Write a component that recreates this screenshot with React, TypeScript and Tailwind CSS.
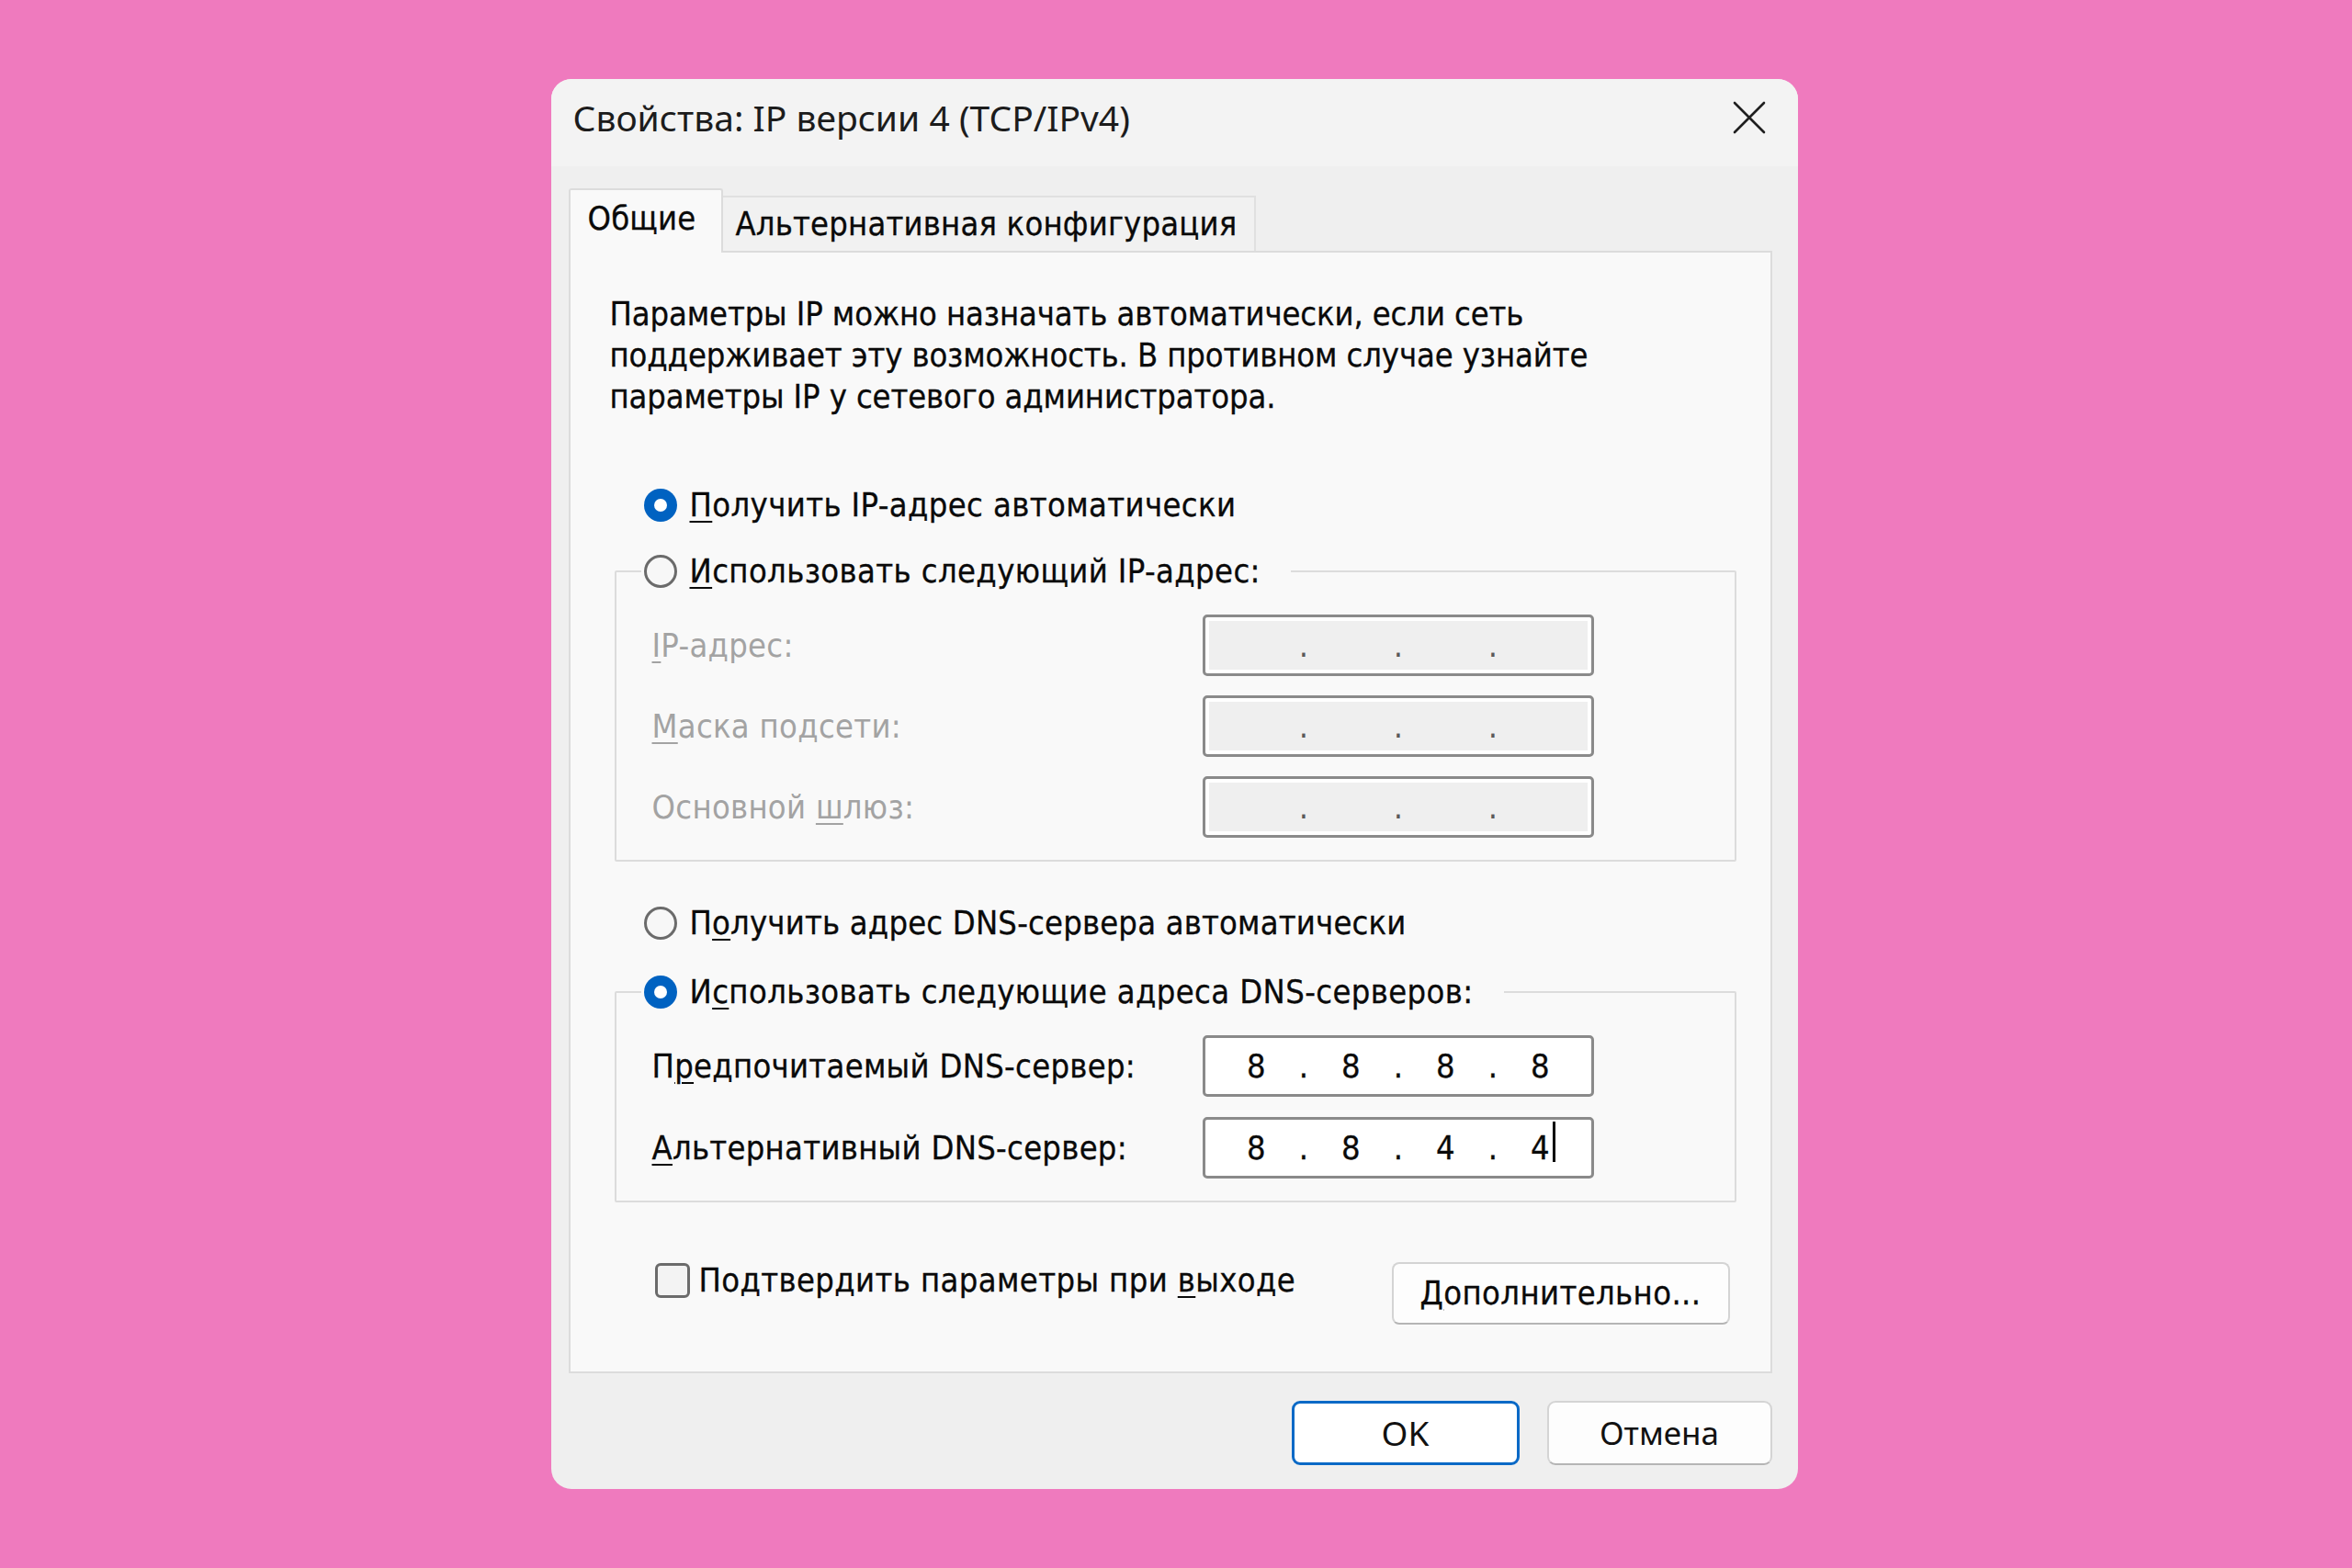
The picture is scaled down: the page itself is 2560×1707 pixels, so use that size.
import React from 'react';

const shell = "font-['DejaVu_Sans_Condensed','DejaVu_Sans',sans-serif]";
const segoe = "font-['Noto_Sans','Open_Sans',sans-serif]";

function Radio({ checked }: { checked: boolean }) {
  return checked ? (
    <span className="flex h-[36px] w-[36px] shrink-0 items-center justify-center rounded-full bg-[#0062c1]">
      <span className="h-[14px] w-[14px] rounded-full bg-white" />
    </span>
  ) : (
    <span className="h-[36px] w-[36px] shrink-0 rounded-full border-[3px] border-[#6b6b6b] bg-[#f7f7f7]" />
  );
}

function Key({ children }: { children: React.ReactNode }) {
  return <span className="underline decoration-[2px] underline-offset-[5px]">{children}</span>;
}

function IpBox({ octets, disabled, caret }: { octets?: string[]; disabled?: boolean; caret?: boolean }) {
  const cells = octets ?? ['', '', '', ''];
  return (
    <div
      className={
        disabled
          ? 'flex h-[67px] w-[426px] items-center rounded-[5px] border-[3px] border-[#8a8a8a] bg-[#efefef] pl-[17px] shadow-[inset_0_0_0_4px_#ffffff]'
          : 'flex h-[67px] w-[426px] items-center rounded-[5px] border-[3px] border-[#8a8a8a] bg-white pl-[17px]'
      }
    >
      {cells.map((v, i) => (
        <React.Fragment key={i}>
          <span className="flex w-[78px] justify-center text-[#0a0a0a]">
            <span className="relative">
              {v}
              {caret && i === 3 && (
                <span className="absolute right-[-6px] top-[-2px] h-[44px] w-[3px] bg-black" />
              )}
            </span>
          </span>
          {i < 3 && (
            <span className={disabled ? 'w-[25px] text-center text-[#5a5a5a]' : 'w-[25px] text-center text-[#0a0a0a]'}>.</span>
          )}
        </React.Fragment>
      ))}
    </div>
  );
}

function Row({ label, children, disabled }: { label: React.ReactNode; children: React.ReactNode; disabled?: boolean }) {
  return (
    <div className="flex h-[67px] items-center pl-[39px]">
      <span className={disabled ? 'w-[599px] shrink-0 text-[#a3a3a3]' : 'w-[599px] shrink-0 text-[#0a0a0a]'}>{label}</span>
      {children}
    </div>
  );
}

export default function App() {
  return (
    <div className={`flex h-screen w-full items-center justify-center bg-[#ef7abe] ${shell}`}>
      <div className="mr-[4px] flex h-[1535px] w-[1357px] flex-col overflow-hidden rounded-[22px] bg-[#efefef]">
        {/* Title bar */}
        <div className="flex h-[95px] shrink-0 items-center justify-between bg-[#f3f3f3] pb-[10px] pl-[24px] pr-[35px]">
          <span className={`${segoe} text-[39px] text-[#1c1c1c]`}>Свойства: IP версии 4 (TCP/IPv4)</span>
          <svg width="36" height="36" viewBox="0 0 36 36" className="mt-[-2px]">
            <path d="M2 2 L34 34 M34 2 L2 34" stroke="#1f1f1f" strokeWidth="2.6" strokeLinecap="round" />
          </svg>
        </div>

        <div className="flex flex-1 flex-col pl-[19px] pr-[28px] pt-[24px]">
          {/* Tabs */}
          <div className="flex h-[68px] items-end text-[36px] tracking-[0.2px] text-[#0a0a0a] [-webkit-text-stroke:0.3px_#0a0a0a]">
            <div className="relative z-10 mb-[-2px] flex h-[70px] w-[168px] items-center rounded-t-[3px] border-2 border-b-0 border-[#dcdcdc] bg-[#f9f9f9] pl-[19px] pb-[6px]">
              Общие
            </div>
            <div className="flex h-[60px] w-[580px] items-center border-2 border-b-0 border-l-0 border-[#e0e0e0] bg-[#f1f1f1] pl-[14px]">
              Альтернативная конфигурация
            </div>
          </div>

          {/* Panel */}
          <div className="flex h-[1222px] shrink-0 flex-col border-2 border-[#dcdcdc] bg-[#f9f9f9] text-[36px] text-[#0a0a0a]">
            <p className="pl-[43px] pt-[44px] leading-[45px] whitespace-nowrap tracking-[-0.1px] [-webkit-text-stroke:0.3px_#0a0a0a]">
              Параметры IP можно назначать автоматически, если сеть
              <br />
              поддерживает эту возможность. В противном случае узнайте
              <br />
              параметры IP у сетевого администратора.
            </p>

            <div className="ml-[80px] mt-[74px] flex h-[44px] items-center gap-[14px] tracking-[0.4px] [-webkit-text-stroke:0.3px_#0a0a0a]">
              <Radio checked />
              <span>
                <Key>П</Key>олучить IP-адрес автоматически
              </span>
            </div>

            <fieldset className="ml-[48px] mr-[37px] mt-[28px] rounded-[2px] border-2 border-[#dcdcdc] pb-[24px]">
              <legend className="ml-[27px] flex h-[44px] items-center gap-[14px] pl-[3px] pr-[33px] tracking-[0.4px] [-webkit-text-stroke:0.3px_#0a0a0a]">
                <Radio checked={false} />
                <span>
                  <Key>И</Key>спользовать следующий IP-адрес:
                </span>
              </legend>
              <div className="mt-[25px] flex flex-col gap-[21px] tracking-[0.3px]">
                <Row disabled label={<><Key>I</Key>P-адрес:</>}>
                  <IpBox disabled />
                </Row>
                <Row disabled label={<><Key>М</Key>аска подсети:</>}>
                  <IpBox disabled />
                </Row>
                <Row disabled label={<>Основной <Key>ш</Key>люз:</>}>
                  <IpBox disabled />
                </Row>
              </div>
            </fieldset>

            <div className="ml-[80px] mt-[45px] flex h-[44px] items-center gap-[14px] tracking-[0.2px] [-webkit-text-stroke:0.3px_#0a0a0a]">
              <Radio checked={false} />
              <span>
                П<Key>о</Key>лучить адрес DNS-сервера автоматически
              </span>
            </div>

            <fieldset className="ml-[48px] mr-[37px] mt-[31px] rounded-[2px] border-2 border-[#dcdcdc] pb-[24px]">
              <legend className="ml-[27px] flex h-[44px] items-center gap-[14px] pl-[3px] pr-[33px] tracking-[0.4px] [-webkit-text-stroke:0.3px_#0a0a0a]">
                <Radio checked />
                <span>
                  И<Key>с</Key>пользовать следующие адреса DNS-серверов:
                </span>
              </legend>
              <div className="mt-[25px] flex flex-col gap-[22px] tracking-[0.3px] [-webkit-text-stroke:0.3px_#0a0a0a]">
                <Row label={<>П<Key>р</Key>едпочитаемый DNS-сервер:</>}>
                  <IpBox octets={['8', '8', '8', '8']} />
                </Row>
                <Row label={<><Key>А</Key>льтернативный DNS-сервер:</>}>
                  <IpBox octets={['8', '8', '4', '4']} caret />
                </Row>
              </div>
            </fieldset>

            <div className="ml-[92px] mr-[44px] mt-[63px] flex items-start justify-between tracking-[0.4px] [-webkit-text-stroke:0.3px_#0a0a0a]">
              <div className="flex h-[44px] items-center gap-[10px]">
                <span className="h-[38px] w-[38px] rounded-[6px] border-[3px] border-[#6b6b6b] bg-[#f3f3f3] [-webkit-text-stroke:0]" />
                <span>
                  Подтвердить параметры при <Key>в</Key>ыходе
                </span>
              </div>
              <button className="mt-[2px] flex h-[68px] w-[368px] items-center justify-center rounded-[8px] border-2 border-[#d4d4d4] border-b-[#b5b5b5] bg-[#fdfdfd] text-[36px] text-[#0a0a0a]">
                <Key>Д</Key>ополнительно...
              </button>
            </div>
          </div>

          {/* Footer buttons */}
          <div className="mt-[30px] flex justify-end gap-[30px]">
            <button className={`${segoe} flex h-[70px] w-[248px] items-center justify-center rounded-[9px] border-[3px] border-[#0a69c6] bg-white text-[37px] text-[#111]`}>
              OK
            </button>
            <button className={`${segoe} flex h-[70px] w-[245px] items-center justify-center rounded-[9px] border-2 border-[#d4d4d4] border-b-[#b5b5b5] bg-[#fdfdfd] text-[35px] text-[#111]`}>
              Отмена
            </button>
          </div>
        </div>
      </div>
    </div>
  );
}
